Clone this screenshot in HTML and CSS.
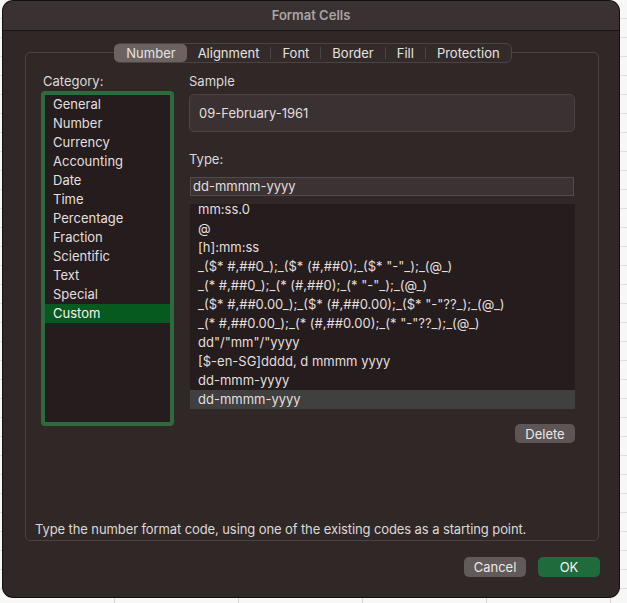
FILE: index.html
```html
<!DOCTYPE html>
<html>
<head>
<meta charset="utf-8">
<title>Format Cells</title>
<link rel="stylesheet" href="styles.css">
</head>
<body>
<div class="win">
  <div class="titlebar">Format Cells</div>
  <div class="content">
    <div class="tabs">
      <span class="tab on">Number</span>
      <span class="tab">Alignment</span>
      <span class="sep"></span>
      <span class="tab">Font</span>
      <span class="sep"></span>
      <span class="tab">Border</span>
      <span class="sep"></span>
      <span class="tab">Fill</span>
      <span class="sep"></span>
      <span class="tab">Protection</span>
    </div>
    <div class="group">
      <div class="cols">
        <div class="catcol">
          <div class="label">Category:</div>
          <ul class="catlist">
            <li>General</li>
            <li>Number</li>
            <li>Currency</li>
            <li>Accounting</li>
            <li>Date</li>
            <li>Time</li>
            <li>Percentage</li>
            <li>Fraction</li>
            <li>Scientific</li>
            <li>Text</li>
            <li>Special</li>
            <li class="sel">Custom</li>
          </ul>
        </div>
        <div class="main">
          <div class="label">Sample</div>
          <div class="sample">09-February-1961</div>
          <div class="label type-label">Type:</div>
          <div class="typein">dd-mmmm-yyyy</div>
          <ul class="typelist">
            <li class="first">mm:ss.0</li>
            <li>@</li>
            <li>[h]:mm:ss</li>
            <li>_($* #,##0_);_($* (#,##0);_($* "-"_);_(@_)</li>
            <li>_(* #,##0_);_(* (#,##0);_(* "-"_);_(@_)</li>
            <li>_($* #,##0.00_);_($* (#,##0.00);_($* "-"??_);_(@_)</li>
            <li>_(* #,##0.00_);_(* (#,##0.00);_(* "-"??_);_(@_)</li>
            <li>dd"/"mm"/"yyyy</li>
            <li>[$-en-SG]dddd, d mmmm yyyy</li>
            <li>dd-mmm-yyyy</li>
            <li class="sel">dd-mmmm-yyyy</li>
          </ul>
          <div class="delrow"><button class="btn">Delete</button></div>
        </div>
      </div>
      <div class="hint">Type the number format code, using one of the existing codes as a starting point.</div>
    </div>
    <div class="buttons">
      <button class="btn cancel">Cancel</button>
      <button class="btn ok">OK</button>
    </div>
  </div>
</div>
</body>
</html>
```

FILE: styles.css
```css
html, body {
  margin: 0;
  height: 100%;
}
body {
  background-color: #f7f7f7;
  background-image:
    repeating-linear-gradient(90deg, transparent 0 114px, #d4d4d4 114px 115px, transparent 115px 124px),
    repeating-linear-gradient(180deg, transparent 0 18px, #dedede 18px 19px);
  font-family: Inter, "Liberation Sans", sans-serif;
  font-size: 13px;
  color: #e4dfdf;
  overflow: hidden;
}
ul {
  list-style: none;
  margin: 0;
  padding: 0;
}
.win {
  margin: 1px 0 0 3px;
  width: 616px;
  height: 596px;
  background: #302827;
  border-radius: 10px;
  box-shadow: 0 0 0 1px #151010;
  overflow: hidden;
  display: flex;
  flex-direction: column;
}
.titlebar {
  height: 29px;
  line-height: 29px;
  flex: none;
  text-align: center;
  font-weight: 600;
  color: #aaa4a4;
  background: #3a3232;
  border-bottom: 1px solid #1a1414;
}
.content {
  flex: 1;
  display: flex;
  flex-direction: column;
  padding: 0 20px 0 22px;
}
.tabs {
  align-self: center;
  margin: 12px 0 0 2px;
  height: 18px;
  display: flex;
  align-items: center;
  background: #332b2a;
  border: 1px solid #4c4444;
  border-radius: 6px;
  position: relative;
  z-index: 1;
}
.tab {
  height: 18px;
  line-height: 18px;
  padding: 0 11px;
  color: #e6e2e2;
}
.tab.on {
  background: #6b6261;
  border-radius: 5px;
  margin-left: -1px;
  padding: 0 11px 0 12px;
}
.sep {
  width: 1px;
  height: 12px;
  background: #4e4646;
}
.group {
  margin-top: -11px;
  height: 487px;
  border: 1px solid #4a4242;
  border-radius: 5px;
  display: flex;
  flex-direction: column;
}
.cols {
  display: flex;
  padding: 20px 0 0 15px;
}
.label {
  height: 16px;
  line-height: 16px;
  color: #ddd8d8;
}
.catcol .label {
  padding-left: 2px;
}
.catlist {
  margin-top: 2px;
  width: 125px;
  height: 327px;
  border: 4px solid #2e6a3e;
  border-radius: 4px;
  background: #251d1d;
}
.catlist li {
  height: 19px;
  line-height: 19px;
  padding-left: 8px;
}
.catlist li.sel {
  background: #065a1f;
  color: #f4f4f4;
}
.main {
  margin-left: 15px;
  width: 386px;
  display: flex;
  flex-direction: column;
}
.sample {
  margin-top: 5px;
  height: 36px;
  line-height: 36px;
  padding-left: 9px;
  background: #3a3232;
  border: 1px solid #4b4343;
  border-radius: 5px;
}
.type-label {
  margin-top: 19px;
}
.typein {
  margin: 10px 1px 0 1px;
  height: 17px;
  line-height: 17px;
  padding-left: 2px;
  background: #3b3333;
  border: 1px solid #534b4b;
}
.typelist {
  margin: 8px 0 0 1px;
  height: 205px;
  background: #251d1d;
}
.typelist li {
  height: 19px;
  line-height: 19px;
  padding-left: 8px;
  white-space: nowrap;
}
.typelist li.first {
  height: 15px;
  line-height: 11px;
}
.typelist li.sel {
  background: #414040;
}
.delrow {
  display: flex;
  justify-content: flex-end;
  margin-top: 15px;
}
.btn {
  font: inherit;
  color: #ece8e8;
  border: none;
  height: 19px;
  width: 60px;
  padding: 0;
  border-radius: 5px;
  background: #5e5656;
}
.hint {
  margin-top: auto;
  padding: 0 0 3px 9px;
  line-height: 16px;
  color: #ddd8d8;
  letter-spacing: -0.1px;
}
.buttons {
  display: flex;
  justify-content: flex-end;
  gap: 12px;
  margin: 16px -1px 0 0;
}
.buttons .btn {
  height: 20px;
  width: 62px;
}
.btn.cancel {
  background: #625a59;
}
.btn.ok {
  background: #1f6b3c;
  color: #f2f2f2;
}
```
